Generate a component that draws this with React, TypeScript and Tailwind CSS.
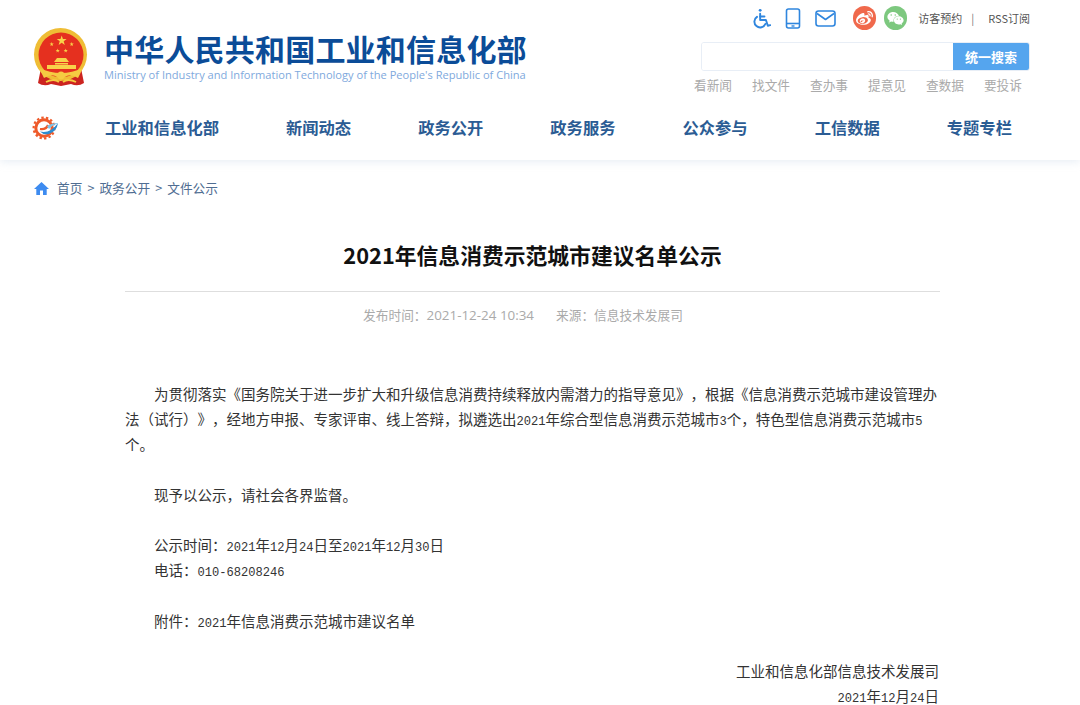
import { FaWeibo, FaWeixin } from "react-icons/fa";

const navItems = ["工业和信息化部", "新闻动态", "政务公开", "政务服务", "公众参与", "工信数据", "专题专栏"];
const quickLinks = ["看新闻", "找文件", "查办事", "提意见", "查数据", "要投诉"];

const Star = ({ x, y, r }: { x: number; y: number; r: number }) => {
  const points = Array.from({ length: 10 }, (_, i) => {
    const radius = i % 2 === 0 ? r : r * 0.4;
    const angle = (Math.PI / 5) * i - Math.PI / 2;
    return `${x + radius * Math.cos(angle)},${y + radius * Math.sin(angle)}`;
  }).join(" ");
  return <polygon points={points} fill="#f8d24a" />;
};

const Emblem = () => (
  <svg width="56" height="60" viewBox="0 0 56 60">
    <path d="M9 40 L6 55 Q12 59 19 56 L29 58 L39 56 Q46 59 52 55 L49 40 Z" fill="#cc2420" />
    <circle cx="28.5" cy="26.5" r="26.5" fill="#efbd35" />
    <circle cx="29" cy="27" r="22.5" fill="#e5301f" />
    <Star x={29.7} y={12.7} r={5.2} />
    <Star x={19.7} y={16.3} r={2.2} />
    <Star x={39.7} y={16.3} r={2.2} />
    <Star x={25.7} y={22.7} r={2.2} />
    <Star x={33.7} y={22.7} r={2.2} />
    <path d="M22 34 L25 30 H34 L37 34 Z" fill="#f8d24a" />
    <path d="M23 35 H36 V36.5 H23 Z M15 37 H44 V41 H15 Z" fill="#f8d24a" />
    <path d="M7 40 Q29 50 51 40 L46 50 Q38 45 33 49 Q29 54 25 49 Q20 45 12 50 Z" fill="#f5cb42" />
    <circle cx="29" cy="47" r="3.5" fill="#f5cb42" />
    <path d="M14 54 Q22 50 27 54 M31 54 Q36 50 44 54" fill="none" stroke="#f5cb42" strokeWidth="1.8" />
  </svg>
);

const GearLogo = () => (
  <svg width="26" height="24" viewBox="0 0 26 24">
    <circle cx="12" cy="12" r="8.2" fill="none" stroke="#ee5a2a" strokeWidth="3" />
    <circle cx="12" cy="12" r="10.4" fill="none" stroke="#ee5a2a" strokeWidth="2.2" strokeDasharray="2.4 2.2" />
    <path d="M8 13 Q14 14 16 9" fill="none" stroke="#ee5a2a" strokeWidth="2.2" />
    <path d="M8 15.5 Q18 18 26 7 Q25 15 17 18 Q11 19 8 15.5 Z" fill="#2d8ccf" />
    <path d="M15 10 Q21 6.5 26 7 Q21 9 17 13 Z" fill="#7cc4ea" />
  </svg>
);

const WheelchairIcon = () => (
  <svg width="20" height="21" viewBox="0 0 20 21" fill="none" stroke="#2f86de" strokeWidth="2" strokeLinecap="round" strokeLinejoin="round">
    <circle cx="8.5" cy="2" r="1.5" fill="#2f86de" stroke="none" />
    <path d="M8.5 5.5 V12 H14.5 L16.5 18 L19 17.4" />
    <path d="M8.5 8.5 H13" />
    <path d="M5.2 8.8 A6 6 0 1 0 14 16.2" />
  </svg>
);

const PhoneIcon = () => (
  <svg width="16" height="21" viewBox="0 0 16 21" fill="none" stroke="#2f86de" strokeWidth="1.6">
    <rect x="1.5" y="1" width="13" height="19" rx="2" />
    <path d="M1.5 15.5 H14.5" />
    <path d="M6.5 18 H9.5" strokeWidth="1.4" />
  </svg>
);

const MailIcon = () => (
  <svg width="21" height="17" viewBox="0 0 21 17" fill="none" stroke="#2f86de" strokeWidth="1.6" strokeLinejoin="round">
    <rect x="1" y="1" width="19" height="15" rx="2.5" />
    <path d="M2 3.5 L10.5 9.5 L19 3.5" />
  </svg>
);

// digits in the body copy sit in a half-em monospace
const BodyText = ({ children }: { children: string }) => (
  <>
    {children.split(/(\d[\d-]*)/).map((part, index) =>
      index % 2 === 1 ? (
        <span key={index} className="font-['Liberation_Mono',monospace] text-[12.08px] leading-none">
          {part}
        </span>
      ) : (
        part
      ),
    )}
  </>
);

export default function App() {
  return (
    <div className="h-[705px] w-[1080px] overflow-hidden bg-white font-['Noto_Sans_CJK_SC',sans-serif]">
      <header className="h-[160px] bg-white shadow-[0_2px_8px_rgba(190,205,225,0.35)]">
        <div className="flex h-[105px] justify-between pl-[32px] pr-[50px]">
          <div className="flex pt-[28px]">
            <Emblem />
            <div className="ml-[16px]">
              <h1 className="pt-[4px] text-[30px] leading-[33px] font-bold tracking-[0.2px] whitespace-nowrap text-[#0b4c98]">
                中华人民共和国工业和信息化部
              </h1>
              <p className="mt-[2px] font-['Open_Sans',sans-serif] text-[11.1px] leading-[16px] whitespace-nowrap text-[#80a9dd]">
                Ministry of Industry and Information Technology of the People's Republic of China
              </p>
            </div>
          </div>

          <div className="flex w-[329px] flex-col pt-[7px]">
            <div className="flex h-[22px] items-center pl-[51px] text-[11px] text-[#555]">
              <WheelchairIcon />
              <span className="ml-[14px]"><PhoneIcon /></span>
              <span className="ml-[14px]"><MailIcon /></span>
              <span className="ml-[17px] flex h-[24px] w-[24px] items-center justify-center rounded-full bg-[#f0694c] text-[17px] text-white"><FaWeibo /></span>
              <span className="ml-[8px] flex h-[24px] w-[24px] items-center justify-center rounded-full bg-[#7dc87f] text-[17px] text-white"><FaWeixin /></span>
              <span className="ml-[11px] whitespace-nowrap">访客预约</span>
              <span className="ml-[9px] text-[#777]">|</span>
              <span className="ml-[14px] whitespace-nowrap">RSS订阅</span>
            </div>
            <div className="mt-[13px] flex h-[29px] overflow-hidden rounded-[3px] border border-[#e8eef6]">
              <div className="flex-1 bg-white" />
              <button className="w-[76px] bg-[#55a5ee] text-[13px] font-bold text-white">统一搜索</button>
            </div>
            <nav className="mt-[5px] flex justify-between pr-[8px] text-[12.7px] leading-[18px] text-[#aaa]">
              <span className="-ml-[7px]">{quickLinks[0]}</span>
              {quickLinks.slice(1).map((link) => (
                <span key={link}>{link}</span>
              ))}
            </nav>
          </div>
        </div>

        <nav className="flex h-[45px] items-center pl-[32px] pr-[68px]">
          <GearLogo />
          <ul className="ml-[47px] flex flex-1 justify-between text-[16.3px] font-bold text-[#2b5c94]">
            {navItems.map((item) => (
              <li key={item} className="whitespace-nowrap">{item}</li>
            ))}
          </ul>
        </nav>
      </header>

      <div className="flex h-[58px] items-center pb-[2px] pl-[34px] text-[12.7px] text-[#4f6d92]">
        <svg width="15" height="13" viewBox="0 0 15 13" fill="#3d8bf0" className="mr-[8px]">
          <path d="M7.5 0 L15 7 H12.7 V13 H9 V8.5 H6 V13 H2.3 V7 H0 Z" />
        </svg>
        <span>首页</span>
        <span className="mx-[5px]">&gt;</span>
        <span>政务公开</span>
        <span className="mx-[5px]">&gt;</span>
        <span>文件公示</span>
      </div>

      <main className="mx-[125px] w-[815px]">
        <h2 className="pt-[18px] text-center text-[21.8px] leading-[38px] font-bold text-[#111]">
          2021年信息消费示范城市建议名单公示
        </h2>
        <div className="mt-[17px] border-t border-[#dedede]" />
        <div className="mt-[13px] flex justify-center gap-[22px] pr-[19px] text-[12.7px] leading-[20px] text-[#aaa]">
          <span>
            发布时间：<span className="font-['Open_Sans',sans-serif] text-[13.4px]">2021-12-24 10:34</span>
          </span>
          <span>来源：信息技术发展司</span>
        </div>

        <article className="mt-[56px] text-[14.5px] leading-[25.2px] text-[#333] [text-spacing-trim:space-all]">
          <p className="indent-[29px]">
            <BodyText>
              为贯彻落实《国务院关于进一步扩大和升级信息消费持续释放内需潜力的指导意见》，根据《信息消费示范城市建设管理办法（试行）》，经地方申报、专家评审、线上答辩，拟遴选出2021年综合型信息消费示范城市3个，特色型信息消费示范城市5个。
            </BodyText>
          </p>
          <p className="mt-[25.2px] indent-[29px]">现予以公示，请社会各界监督。</p>
          <p className="mt-[25.2px] indent-[29px]">
            <BodyText>公示时间：2021年12月24日至2021年12月30日</BodyText>
          </p>
          <p className="indent-[29px]">
            <BodyText>电话：010-68208246</BodyText>
          </p>
          <p className="mt-[25.2px] indent-[29px]">
            <BodyText>附件：2021年信息消费示范城市建议名单</BodyText>
          </p>
          <p className="mt-[25.2px] pr-[1px] text-right">工业和信息化部信息技术发展司</p>
          <p className="pr-[1px] text-right">
            <BodyText>2021年12月24日</BodyText>
          </p>
        </article>
      </main>
    </div>
  );
}
